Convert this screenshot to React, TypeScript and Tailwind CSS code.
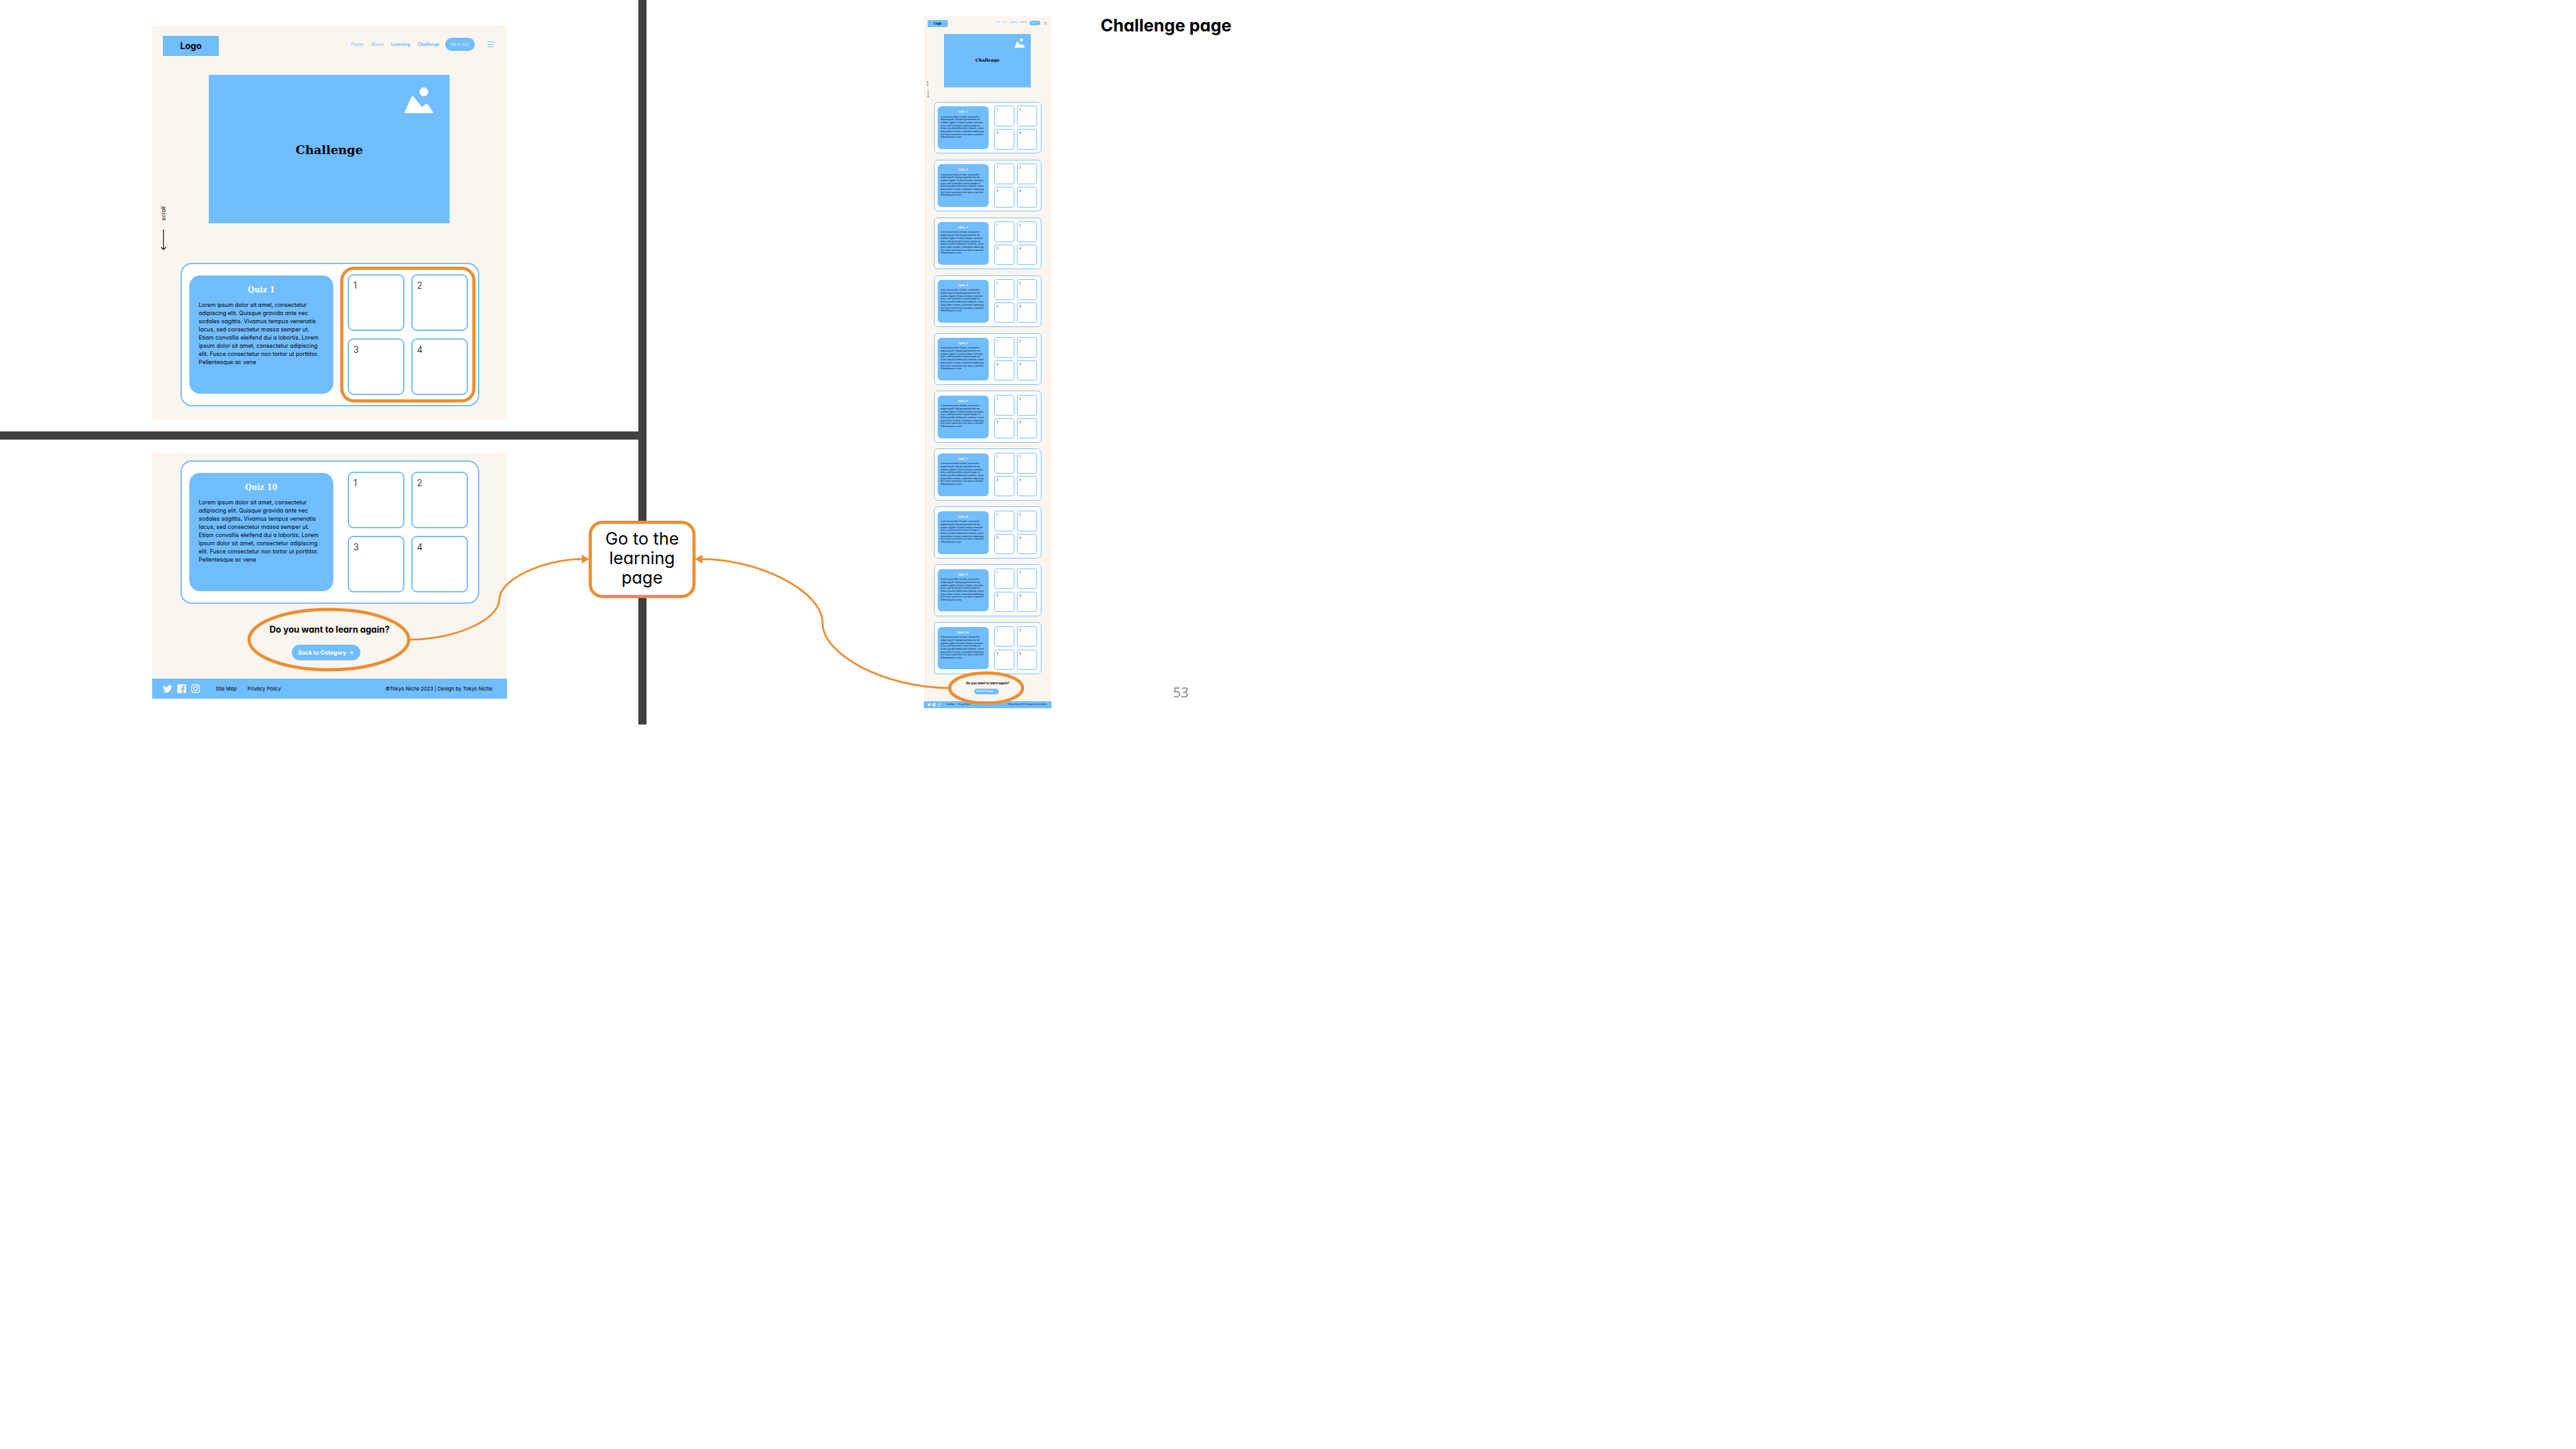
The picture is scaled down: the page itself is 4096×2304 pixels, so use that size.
import React from "react";

const LINES = [
  "Lorem ipsum dolor sit amet, consectetur",
  "adipiscing elit. Quisque gravida ante nec",
  "sodales sagittis. Vivamus tempus venenatis",
  "lacus, sed consectetur massa semper ut.",
  "Etiam convallis eleifend dui a lobortis. Lorem",
  "ipsum dolor sit amet, consectetur adipiscing",
  "elit. Fusce consectetur non tortor ut porttitor.",
  "Pellentesque ac vene",
];

const QUIZZES = [1, 2, 3, 4, 5, 6, 7, 8, 9, 10];

function Header() {
  return (
    <header className="flex h-[78px] items-start justify-between pt-4 pr-[21px] pl-[17px]">
      <a
        href="#home"
        className="flex h-8 w-[89px] items-center justify-center bg-[#70bdff] text-[14px] leading-none font-bold text-black"
      >
        Logo
      </a>
      <nav className="mt-[3px] flex h-[21px] items-center text-[7px] leading-none text-[#70bdff]">
        <a href="#home" className="mr-3">Home</a>
        <a href="#about" className="mr-3">About</a>
        <a href="#learning" className="mr-3 font-bold">Learning</a>
        <a href="#challenge" className="mr-[9px] font-bold">Challenge</a>
        <button className="h-[21px] w-[47px] rounded-full bg-[#70bdff] text-center text-[6px] leading-none font-light whitespace-nowrap text-white">
          EN or 中文
        </button>
        <button aria-label="Menu" className="ml-5 flex w-[10px] flex-col gap-[3px]">
          <span className="h-px w-full bg-[#70bdff]" />
          <span className="h-px w-full bg-[#70bdff]" />
          <span className="h-px w-full bg-[#70bdff]" />
        </button>
      </nav>
    </header>
  );
}

function Hero() {
  return (
    <section className="flex h-[299px] items-start">
      <div className="flex w-[90px] shrink-0 flex-col gap-[14px] self-stretch pb-5 pl-[13px]">
        <span className="mt-auto rotate-180 text-[9px] leading-[10px] text-black [writing-mode:vertical-rl]">
          scroll
        </span>
        <svg viewBox="0 0 10 33" className="h-[33px] w-[10px]" fill="none" stroke="black" strokeWidth="1.2">
          <path d="M5 0V32M1 28L5 32L9 28" />
        </svg>
      </div>
      <div className="relative mr-[91px] flex h-[236px] flex-1 items-center justify-center bg-[#70bdff]">
        <h2 className="pt-[2px] font-['DejaVu_Serif','Liberation_Serif',serif] text-[19px] leading-none font-bold text-black">
          Challenge
        </h2>
        <svg viewBox="0 0 46 41" className="absolute top-5 right-[26px] h-[41px] w-[46px]" fill="white">
          <circle cx="31" cy="7" r="7" />
          <path d="M11.5 14.5Q13 12.5 14.5 14.5L27 30Q28 31.500 29.200 30.200L33.500 26.500Q35.200 25.300 36.800 26.500L45.500 39Q46.200 41 44.500 41H1.500Q-.2 41 .4 39Z" />
        </svg>
      </div>
    </section>
  );
}

function QuizCard({ number, highlighted = false }: { number: number; highlighted?: boolean }) {
  return (
    <article className="mr-[44px] ml-[45px] flex rounded-[18px] border-2 border-[#70bdff] bg-white py-4 pr-4 pl-3">
      <div className="my-[2px] flex-1 rounded-[17px] bg-[#70bdff] px-[15px] pt-4">
        <h3 className="text-center font-['DejaVu_Serif','Liberation_Serif',serif] text-[12px] leading-[14px] font-bold text-white">
          Quiz {number}
        </h3>
        <p className="mt-[10px] text-[9px] leading-[13px] whitespace-nowrap text-black">
          {LINES.map((line) => (
            <React.Fragment key={line}>
              {line}
              <br />
            </React.Fragment>
          ))}
        </p>
      </div>
      <div className="relative ml-[23px] grid grid-cols-2 gap-x-[11px] gap-y-3">
        {[1, 2, 3, 4].map((n) => (
          <button
            key={n}
            className="flex size-[90px] items-start rounded-[9px] border-2 border-[#70bdff] bg-white px-[7px] py-2 text-[14px] leading-[16px] font-light text-black"
          >
            {n}
          </button>
        ))}
        {highlighted && (
          <div className="pointer-events-none absolute -inset-3 rounded-[22px] border-[5px] border-[#ed8e30]" />
        )}
      </div>
    </article>
  );
}

function LearnAgain() {
  return (
    <section className="flex h-[119px] flex-col items-center pt-[33px]">
      <h3 className="text-[14px] leading-4 font-bold text-black">Do you want to learn again?</h3>
      <button className="mt-4 mr-3 flex h-[25px] w-[109px] items-center justify-center gap-1 rounded-full bg-[#70bdff] text-[9px] font-bold whitespace-nowrap text-white">
        Back to Category
        <svg viewBox="0 0 8 8" className="size-[7px]" fill="none" stroke="white" strokeWidth="1.2">
          <path d="M0 4H7M4 1L7 4L4 7" />
        </svg>
      </button>
    </section>
  );
}

function Footer() {
  return (
    <footer className="flex h-8 items-center bg-[#70bdff] pr-[23px] pl-[17px] text-[8px] leading-none whitespace-nowrap text-black">
      <a href="#twitter" aria-label="Twitter">
        <svg viewBox="0 2 24 20" className="h-[13px] w-[15px]" fill="#faf6ef">
          <path d="M23.950 4.570a10 10 0 0 1-2.820.770 4.960 4.960 0 0 0 2.160-2.720 9.900 9.900 0 0 1-3.120 1.190 4.920 4.920 0 0 0-8.390 4.480A13.930 13.930 0 0 1 1.640 3.160a4.920 4.920 0 0 0 1.520 6.570 4.900 4.900 0 0 1-2.230-.61v.06a4.920 4.920 0 0 0 3.950 4.830 5 5 0 0 1-2.210.08 4.940 4.940 0 0 0 4.600 3.420A9.870 9.870 0 0 1 0 19.540a13.940 13.940 0 0 0 7.550 2.210c9.050 0 14-7.500 14-13.980 0-.21 0-.42-.02-.63a9.940 9.940 0 0 0 2.460-2.550z" />
        </svg>
      </a>
      <a href="#facebook" aria-label="Facebook" className="ml-2">
        <svg viewBox="0 0 24 24" className="size-[14px]" fill="#faf6ef">
          <path d="M0 0H24V24H16.500V14.700H19.600L20.100 11.100H16.500V8.800C16.500 7.700 17 7 18.400 7H20.200V3.800C19.800 3.700 18.800 3.600 17.600 3.600 14.800 3.600 12.900 5.300 12.900 8.400V11.100H9.800V14.700H12.900V24H0Z" />
        </svg>
      </a>
      <a href="#instagram" aria-label="Instagram" className="ml-2">
        <svg viewBox="0 0 24 24" className="size-[14px]" fill="none" stroke="#faf6ef" strokeWidth="2.600">
          <rect x="1.300" y="1.300" width="21.400" height="21.400" rx="6" />
          <circle cx="12" cy="12" r="5" />
          <circle cx="18" cy="6" r="1.400" fill="#faf6ef" stroke="none" />
        </svg>
      </a>
      <a href="#sitemap" className="ml-[25px]">Site Map</a>
      <a href="#privacy" className="ml-[17px]">Privacy Policy</a>
      <span className="ml-auto">©Tokyo Niche 2023 | Design by Tokyo Niche</span>
    </footer>
  );
}

function Overlay() {
  return (
    <svg
      viewBox="0 0 2048 1152"
      className="pointer-events-none absolute inset-0 size-full"
      fill="none"
      stroke="#ed8e30"
    >
      <ellipse cx="523" cy="1017" rx="127" ry="48" strokeWidth="5" />
      <ellipse cx="1568" cy="1094" rx="58" ry="24" strokeWidth="5" />
      <path d="M652 1017C724 1017 794 985 794 953S865 889 926 889" strokeWidth="3" />
      <path d="M1510 1094C1409 1094 1308 1042 1308 991S1207 889 1116 889" strokeWidth="3" />
      <path d="M937 889L925 882V896Z" fill="#ed8e30" stroke="none" />
      <path d="M1105 889L1117 882V896Z" fill="#ed8e30" stroke="none" />
    </svg>
  );
}

export default function App() {
  return (
    <div className="min-h-screen bg-white font-[Inter,'Noto_Sans_CJK_TC',sans-serif] [font-feature-settings:'cv11']">
      <main className="relative grid w-1/2 grid-cols-[1015fr_13px_1020fr]">
        <div className="flex flex-col">
          <div className="pt-[41px] pr-[209px] pb-[19px] pl-[242px]">
            <div className="bg-[#faf6ef] pb-[21px]">
              <Header />
              <Hero />
              <QuizCard number={1} highlighted />
            </div>
          </div>
          <div className="h-[13px] bg-[#404040]" />
          <div className="pt-[21px] pr-[209px] pl-[242px]">
            <div className="bg-[#faf6ef] pt-3">
              <QuizCard number={10} />
              <LearnAgain />
              <Footer />
            </div>
          </div>
        </div>
        <div className="bg-[#404040]" />
        <div className="flex h-[1152px] items-start pt-[26px] pl-[441px]">
          <div className="[zoom:0.36]">
            <div className="w-[564px] bg-[#faf6ef]">
              <Header />
              <Hero />
              <div className="flex flex-col gap-[26px]">
                {QUIZZES.map((n) => (
                  <QuizCard key={n} number={n} />
                ))}
              </div>
              <LearnAgain />
              <Footer />
            </div>
          </div>
          <div className="ml-[78px] flex flex-col justify-between self-stretch pb-10">
            <h1 className="text-[27px] leading-[30px] font-bold whitespace-nowrap text-black">Challenge page</h1>
            <span className="pl-[115px] font-['Open_Sans','Noto_Sans',sans-serif] text-[22px] leading-6 text-[#898989]">
              53
            </span>
          </div>
        </div>
        <Overlay />
        <a
          href="#learning"
          className="absolute top-[828px] left-[936px] flex h-[123px] w-[170px] items-center justify-center rounded-[22px] border-[5px] border-[#ed8e30] bg-white pb-1 text-center text-[27px] leading-[31px] text-black"
        >
          Go to the
          <br />
          learning
          <br />
          page
        </a>
      </main>
    </div>
  );
}
